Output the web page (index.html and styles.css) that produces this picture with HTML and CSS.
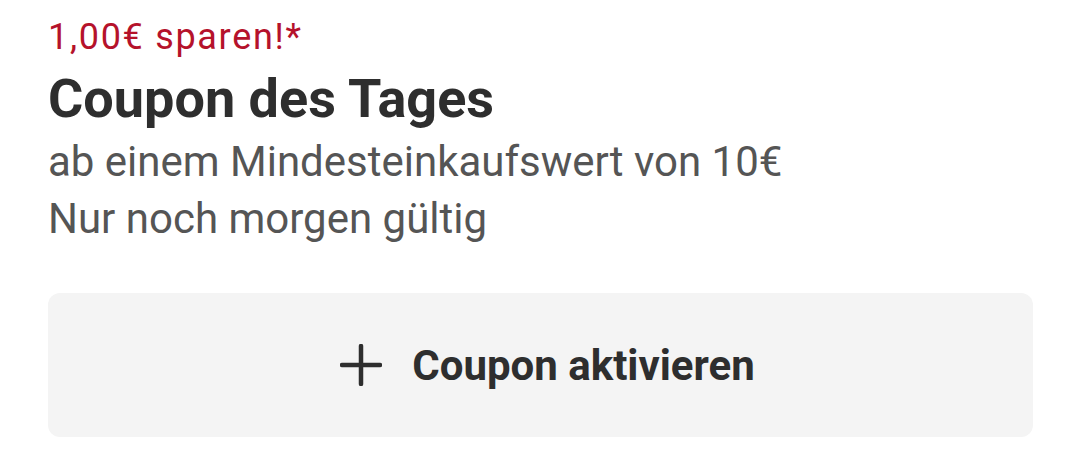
FILE: index.html
```html
<!DOCTYPE html>
<html>
  <head>
    <title>Coupon des Tages</title>
    <meta name="viewport" content="width=device-width,initial-scale=1">
    <link rel="stylesheet" href="styles.css">
  </head>
  <body>
    <div class="coupon">
      <div class="saving">1,00€ sparen!*</div>
      <h2 class="title">Coupon des Tages</h2>
      <div class="info">ab einem Mindesteinkaufswert von 10€</div>
      <div class="info">Nur noch morgen gültig</div>

      <button class="activate">
        <svg class="plus" width="42" height="42" viewBox="0 0 42 42">
          <path d="M21 2 V40 M2 21 H40" stroke="#2e2e2e" stroke-width="4.5" stroke-linecap="round" fill="none"/>
        </svg>
        <span>Coupon aktivieren</span>
      </button>
    </div>
  </body>
</html>
```

FILE: styles.css
```css
body {
  margin: 0;
  background: #fff;
  font-family: Roboto, "Noto Sans", sans-serif;
  color: #2e2e2e;
}
.coupon {
  padding: 11px 47px 0 48px;
}
.saving {
  color: #b5122b;
  font-size: 36px;
  letter-spacing: 1.7px;
  line-height: 53px;
}
.title {
  margin: 0;
  font-size: 54px;
  font-weight: 700;
  line-height: 69px;
}
.info {
  color: #555;
  font-size: 42px;
  line-height: 57px;
}
.activate {
  margin-top: 46px;
  width: 100%;
  height: 144px;
  border: none;
  border-radius: 12px;
  background: #f4f4f4;
  display: flex;
  align-items: center;
  justify-content: center;
  gap: 30px;
  padding: 0 0 0 14px;
  font-family: inherit;
  font-size: 42px;
  font-weight: 700;
  color: #2e2e2e;
}
```
